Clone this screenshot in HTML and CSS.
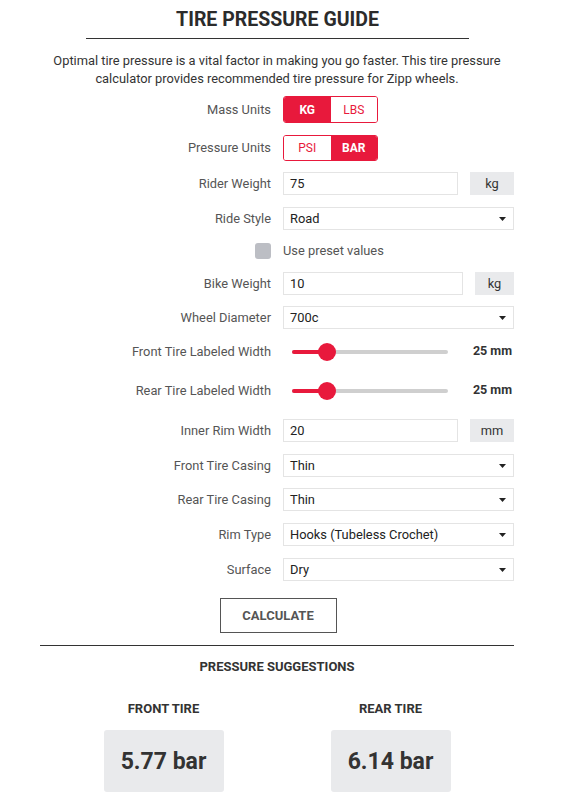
FILE: index.html
```html
<!DOCTYPE html>
<html lang="en">
<head>
<meta charset="utf-8">
<title>Tire Pressure Guide</title>
<link rel="stylesheet" href="styles.css">
</head>
<body>
<main class="page">
  <h1 class="title">TIRE PRESSURE GUIDE</h1>
  <p class="desc">Optimal tire pressure is a vital factor in making you go faster. This tire pressure calculator provides recommended tire pressure for Zipp wheels.</p>

  <div class="form">
    <div class="row r-mass">
      <span class="label">Mass Units</span>
      <div class="toggle t-mass">
        <span class="opt active">KG</span>
        <span class="opt">LBS</span>
      </div>
    </div>

    <div class="row r-pressure">
      <span class="label">Pressure Units</span>
      <div class="toggle t-pressure">
        <span class="opt">PSI</span>
        <span class="opt active">BAR</span>
      </div>
    </div>

    <div class="row r-rider">
      <span class="label">Rider Weight</span>
      <div class="group">
        <div class="input">75</div>
        <div class="unit">kg</div>
      </div>
    </div>

    <div class="row r-style">
      <span class="label">Ride Style</span>
      <div class="select">Road<svg class="caret" width="7" height="4" viewBox="0 0 7 4"><path d="M0 0h7L3.5 4z"/></svg></div>
    </div>

    <div class="row r-check">
      <span class="label"><span class="checkbox"></span></span>
      <span class="check-text">Use preset values</span>
    </div>

    <div class="row r-bike">
      <span class="label">Bike Weight</span>
      <div class="group">
        <div class="input">10</div>
        <div class="unit narrow">kg</div>
      </div>
    </div>

    <div class="row r-wheel">
      <span class="label">Wheel Diameter</span>
      <div class="select">700c<svg class="caret" width="7" height="4" viewBox="0 0 7 4"><path d="M0 0h7L3.5 4z"/></svg></div>
    </div>

    <div class="row r-front">
      <span class="label">Front Tire Labeled Width</span>
      <div class="slider-wrap">
        <div class="slider">
          <div class="fill"></div>
          <div class="thumb"></div>
        </div>
        <span class="value">25 mm</span>
      </div>
    </div>

    <div class="row r-rear">
      <span class="label">Rear Tire Labeled Width</span>
      <div class="slider-wrap">
        <div class="slider">
          <div class="fill"></div>
          <div class="thumb"></div>
        </div>
        <span class="value">25 mm</span>
      </div>
    </div>

    <div class="row r-rim">
      <span class="label">Inner Rim Width</span>
      <div class="group">
        <div class="input">20</div>
        <div class="unit">mm</div>
      </div>
    </div>

    <div class="row r-fcasing">
      <span class="label">Front Tire Casing</span>
      <div class="select">Thin<svg class="caret" width="7" height="4" viewBox="0 0 7 4"><path d="M0 0h7L3.5 4z"/></svg></div>
    </div>

    <div class="row r-rcasing">
      <span class="label">Rear Tire Casing</span>
      <div class="select">Thin<svg class="caret" width="7" height="4" viewBox="0 0 7 4"><path d="M0 0h7L3.5 4z"/></svg></div>
    </div>

    <div class="row r-rimtype">
      <span class="label">Rim Type</span>
      <div class="select">Hooks (Tubeless Crochet)<svg class="caret" width="7" height="4" viewBox="0 0 7 4"><path d="M0 0h7L3.5 4z"/></svg></div>
    </div>

    <div class="row r-surface">
      <span class="label">Surface</span>
      <div class="select">Dry<svg class="caret" width="7" height="4" viewBox="0 0 7 4"><path d="M0 0h7L3.5 4z"/></svg></div>
    </div>
  </div>

  <div class="actions">
    <button class="calc" type="button">CALCULATE</button>
  </div>

  <hr class="divider">

  <h2 class="sugg-title">PRESSURE SUGGESTIONS</h2>

  <div class="results">
    <div class="result">
      <h3 class="result-title">FRONT TIRE</h3>
      <div class="result-box">5.77 bar</div>
    </div>
    <div class="result">
      <h3 class="result-title">REAR TIRE</h3>
      <div class="result-box">6.14 bar</div>
    </div>
  </div>
</main>
</body>
</html>
```

FILE: styles.css
```css
* { box-sizing: border-box; }

html, body {
  margin: 0;
  padding: 0;
  background: #fff;
}

body {
  font-family: Roboto, "Liberation Sans", Arial, sans-serif;
  color: #333;
  font-size: 12.85px;
}

.page {
  width: 474px;
  margin-left: 40px;
  padding-bottom: 14px;
}

.title {
  margin: 8px 45px 0 46px;
  padding-bottom: 6px;
  border-bottom: 1px solid #333;
  font-size: 19.5px;
  line-height: 24px;
  font-weight: 700;
  text-align: center;
  color: #2b2b2b;
}

.desc {
  margin: 13px 0 0;
  font-size: 12.85px;
  line-height: 18px;
  text-align: center;
  color: #333;
}

.form {
  display: flex;
  flex-direction: column;
}

.row {
  display: grid;
  grid-template-columns: 231px 231px;
  column-gap: 12px;
  align-items: center;
}

.label {
  text-align: right;
  color: #555;
  font-size: 12.85px;
  line-height: 16px;
  display: flex;
  justify-content: flex-end;
  align-items: center;
}

.r-mass { margin-top: 8px; height: 27px; }
.r-pressure { margin-top: 12px; height: 26px; }
.r-rider { margin-top: 11px; height: 23px; }
.r-style { margin-top: 12px; height: 23px; }
.r-check { margin-top: 13px; height: 16px; }
.r-bike { margin-top: 13px; height: 23px; }
.r-wheel { margin-top: 11px; height: 23px; }
.r-front { margin-top: 14px; height: 18px; }
.r-rear { margin-top: 21px; height: 18px; }
.r-rim { margin-top: 19px; height: 23px; }
.r-fcasing { margin-top: 12px; height: 23px; }
.r-rcasing { margin-top: 11px; height: 23px; }
.r-rimtype { margin-top: 12px; height: 23px; }
.r-surface { margin-top: 12px; height: 23px; }

/* toggles */
.toggle {
  display: flex;
  width: 95px;
  height: 100%;
  border: 1px solid #e8193c;
  border-radius: 3px;
  overflow: hidden;
}

.opt {
  flex: 1;
  display: flex;
  align-items: center;
  justify-content: center;
  font-size: 12px;
  font-weight: 400;
  color: #e8193c;
  background: #fff;
}

.opt.active {
  background: #e8193c;
  color: #fff;
  font-weight: 700;
}

/* inputs */
.group {
  display: flex;
  gap: 12px;
  height: 23px;
}

.input {
  flex: 1;
  height: 23px;
  border: 1px solid #e4e4e4;
  padding-left: 6px;
  line-height: 21px;
  font-size: 12.85px;
  color: #222;
}

.unit {
  width: 44px;
  height: 23px;
  background: #e9eaec;
  line-height: 23px;
  text-align: center;
  font-size: 12.85px;
  color: #333;
}

.unit.narrow { width: 39px; }

/* selects */
.select {
  height: 23px;
  border: 1px solid #e4e4e4;
  padding: 0 7px 0 6px;
  line-height: 21px;
  font-size: 12.85px;
  color: #222;
  display: flex;
  align-items: center;
  justify-content: space-between;
}

.caret {
  fill: #222;
  margin-top: 1px;
}

/* checkbox */
.checkbox {
  display: block;
  width: 16px;
  height: 16px;
  border-radius: 3px;
  background: #bcbec4;
}

.check-text {
  color: #555;
  font-size: 12.85px;
  line-height: 16px;
}

/* sliders */
.slider-wrap {
  display: flex;
  align-items: center;
  height: 18px;
}

.slider {
  position: relative;
  width: 156px;
  height: 4px;
  margin-left: 9px;
  border-radius: 2px;
  background: #cfcfcf;
}

.fill {
  width: 35px;
  height: 4px;
  border-radius: 2px;
  background: #e8193c;
}

.thumb {
  position: absolute;
  left: 26px;
  top: -7px;
  width: 18px;
  height: 18px;
  border-radius: 50%;
  background: #e8193c;
}

.value {
  margin-left: auto;
  margin-right: 2px;
  margin-top: -3px;
  font-size: 12.5px;
  font-weight: 700;
  color: #333;
}

/* button */
.actions {
  display: flex;
  justify-content: center;
  margin-top: 17px;
  padding-left: 2px;
}

.calc {
  width: 117px;
  height: 35px;
  border: 1px solid #555;
  background: #fff;
  font-family: Roboto, "Liberation Sans", Arial, sans-serif;
  font-size: 13px;
  font-weight: 700;
  color: #555;
  padding: 0;
}

.divider {
  margin: 12px 0 0;
  border: 0;
  border-top: 1px solid #333;
  height: 0;
}

.sugg-title {
  margin: 13px 0 0;
  font-size: 13px;
  line-height: 16px;
  font-weight: 700;
  text-align: center;
  color: #333;
}

.results {
  display: grid;
  grid-template-columns: 227px 227px;
  margin: 26px 0 0 10px;
}

.result {
  display: flex;
  flex-direction: column;
  align-items: center;
}

.result-title {
  margin: 0;
  font-size: 13px;
  line-height: 16px;
  font-weight: 700;
  color: #333;
}

.result-box {
  margin-top: 13px;
  width: 120px;
  height: 62px;
  border-radius: 3px;
  background: #e9eaec;
  display: flex;
  align-items: center;
  justify-content: center;
  font-size: 23px;
  font-weight: 700;
  color: #333;
}
```
